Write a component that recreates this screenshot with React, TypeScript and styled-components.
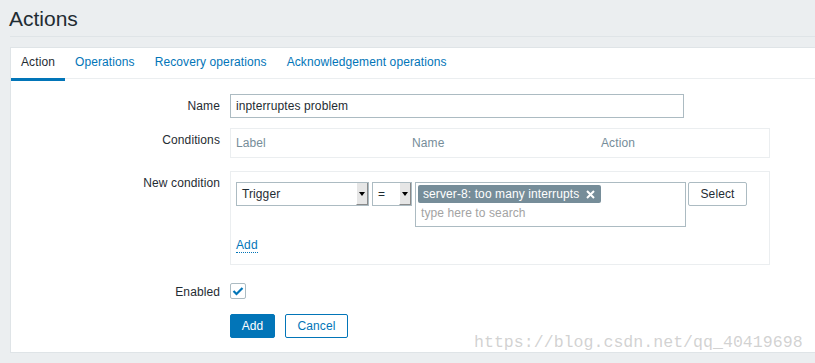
import React from "react";
import styled, { createGlobalStyle } from "styled-components";

const Global = createGlobalStyle`
  html, body { margin: 0; padding: 0; }
  body {
    background: #ebeef0;
    font-family: Arial, "Liberation Sans", sans-serif;
    font-size: 12px;
    letter-spacing: 0.1px;
    color: #1f2c33;
    overflow: hidden;
    width: 815px;
    height: 363px;
  }
`;

const Page = styled.div`
  position: relative;
  width: 815px;
  height: 363px;
  overflow: hidden;
`;

const Header = styled.header`
  margin: 0 0 0 10px;
  padding: 7px 0 5px;
  border-bottom: 1px solid #dfe4e7;
`;

const Title = styled.h1`
  margin: 0 0 0 -1px;
  font-size: 21px;
  line-height: 24px;
  font-weight: normal;
  letter-spacing: 0;
  color: #1f2c33;
`;

const Panel = styled.section`
  margin: 10px -20px 0 10px;
  background: #fff;
  border: 1px solid #dfe4e7;
  padding-bottom: 14px;
`;

const TabList = styled.nav`
  display: flex;
  border-bottom: 1px solid #ebeef0;
  height: 30px;
`;

const Tab = styled.span<{ $active?: boolean }>`
  padding: 7px 10px 0;
  line-height: 14px;
  height: 23px;
  color: ${(p) => (p.$active ? "#1f2c33" : "#0275b8")};
  border-bottom: 3px solid ${(p) => (p.$active ? "#0275b8" : "transparent")};
  margin-bottom: -1px;
  white-space: nowrap;
`;

const Form = styled.div`
  display: grid;
  grid-template-columns: 209px 540px;
  column-gap: 10px;
  padding-top: 15px;
`;

const Label = styled.div<{ $mt?: number }>`
  text-align: right;
  line-height: 24px;
  margin-top: ${(p) => p.$mt ?? 0}px;
  white-space: nowrap;
`;

const Field = styled.div<{ $mt?: number }>`
  margin-top: ${(p) => p.$mt ?? 0}px;
  display: flex;
  align-items: flex-start;
`;

const TextInput = styled.div`
  box-sizing: border-box;
  width: 454px;
  height: 24px;
  border: 1px solid #acbbc2;
  padding: 0 5px;
  line-height: 22px;
  color: #1f2c33;
`;

const CondTable = styled.div`
  box-sizing: border-box;
  width: 540px;
  height: 30px;
  border: 1px solid #ebeef0;
  display: grid;
  grid-template-columns: 176px 189px 1fr;
  padding: 0 5px;
  align-items: center;
  color: #768d99;
`;

const Box = styled.div`
  box-sizing: border-box;
  width: 540px;
  border: 1px solid #ebeef0;
  padding: 10px 5px 11px;
`;

const Controls = styled.div`
  display: flex;
  align-items: flex-start;
`;

const SelectBox = styled.div<{ $w: number; $mr: number }>`
  box-sizing: border-box;
  width: ${(p) => p.$w}px;
  height: 24px;
  margin-right: ${(p) => p.$mr}px;
  border: 1px solid #acbbc2;
  display: flex;
  align-items: stretch;
  background: #fff;
`;

const SelectText = styled.span`
  flex: 1;
  padding-left: 5px;
  line-height: 22px;
`;

const Arrow = styled.span`
  width: 12px;
  background: #e6e6e6;
  border-left: 1px solid #fff;
  border-right: 1px solid #8a8a8a;
  border-bottom: 1px solid #8a8a8a;
  box-sizing: border-box;
  display: flex;
  align-items: center;
  justify-content: center;
  &::after {
    content: "";
    border-left: 3px solid transparent;
    border-right: 3px solid transparent;
    border-top: 4px solid #000;
  }
`;

const Multi = styled.div`
  box-sizing: border-box;
  width: 271px;
  height: 45px;
  margin-right: 2px;
  border: 1px solid #acbbc2;
  padding: 2px 2px 0;
`;

const TagChip = styled.span`
  display: inline-flex;
  align-items: center;
  height: 18px;
  padding: 0 6px 0 5px;
  background: #768d99;
  color: #fff;
  border-radius: 2px;
  white-space: nowrap;
  gap: 7px;
`;

const Placeholder = styled.div`
  padding-left: 3px;
  line-height: 21px;
  color: #a3a3a3;
`;

const Button = styled.button<{ $primary?: boolean; $w: number; $mr?: number }>`
  box-sizing: border-box;
  width: ${(p) => p.$w}px;
  height: 24px;
  margin: 0 ${(p) => p.$mr ?? 0}px 0 0;
  padding: 0;
  border: 1px solid #0275b8;
  background: ${(p) => (p.$primary ? "#0275b8" : "#fff")};
  color: ${(p) => (p.$primary ? "#fff" : "#0275b8")};
  border-radius: 2px;
  font-family: inherit;
  font-size: 12px;
  letter-spacing: inherit;
`;

const GrayButton = styled(Button)`
  border-color: #acbbc2;
  color: #1f2c33;
`;

const AddLink = styled.span`
  display: inline-block;
  margin-top: 11px;
  line-height: 14px;
  color: #0275b8;
  border-bottom: 1px dotted #0275b8;
`;

const Check = styled.span`
  box-sizing: border-box;
  width: 16px;
  height: 16px;
  margin-top: 3px;
  border: 1px solid #acbbc2;
  border-radius: 2px;
  display: flex;
  align-items: center;
  justify-content: center;
`;

const Watermark = styled.div`
  position: absolute;
  left: 474px;
  top: 335px;
  font-family: "Liberation Mono", monospace;
  font-size: 16.6px;
  letter-spacing: 0;
  line-height: 1;
  color: rgba(180, 180, 180, 0.6);
  white-space: nowrap;
  pointer-events: none;
`;

export default function App() {
  return (
    <Page>
      <Global />
      <Header>
        <Title>Actions</Title>
      </Header>
      <Panel>
        <TabList>
          <Tab $active>Action</Tab>
          <Tab>Operations</Tab>
          <Tab>Recovery operations</Tab>
          <Tab>Acknowledgement operations</Tab>
        </TabList>
        <Form>
          <Label>Name</Label>
          <Field>
            <TextInput>inpterruptes problem</TextInput>
          </Field>

          <Label $mt={10}>Conditions</Label>
          <Field $mt={10}>
            <CondTable>
              <span>Label</span>
              <span>Name</span>
              <span>Action</span>
            </CondTable>
          </Field>

          <Label $mt={13}>New condition</Label>
          <Field $mt={13}>
            <Box>
              <Controls>
                <SelectBox $w={133} $mr={3}>
                  <SelectText>Trigger</SelectText>
                  <Arrow />
                </SelectBox>
                <SelectBox $w={40} $mr={3}>
                  <SelectText>=</SelectText>
                  <Arrow />
                </SelectBox>
                <Multi>
                  <TagChip>
                    server-8: too many interrupts
                    <svg width="9" height="9" viewBox="0 0 9 9">
                      <path d="M1 1 L8 8 M8 1 L1 8" stroke="#fff" strokeWidth="2" />
                    </svg>
                  </TagChip>
                  <Placeholder>type here to search</Placeholder>
                </Multi>
                <GrayButton $w={59}>Select</GrayButton>
              </Controls>
              <AddLink>Add</AddLink>
            </Box>
          </Field>

          <Label $mt={15}>Enabled</Label>
          <Field $mt={15}>
            <Check>
              <svg width="12" height="10" viewBox="0 0 12 10">
                <path d="M1.5 5 L4.5 8 L10.5 2" stroke="#0275b8" strokeWidth="2.2" fill="none" />
              </svg>
            </Check>
          </Field>

          <div />
          <Field $mt={10}>
            <Button $primary $w={45} $mr={10}>Add</Button>
            <Button $w={63}>Cancel</Button>
          </Field>
        </Form>
      </Panel>
      <Watermark>https://blog.csdn.net/qq_40419698</Watermark>
    </Page>
  );
}
